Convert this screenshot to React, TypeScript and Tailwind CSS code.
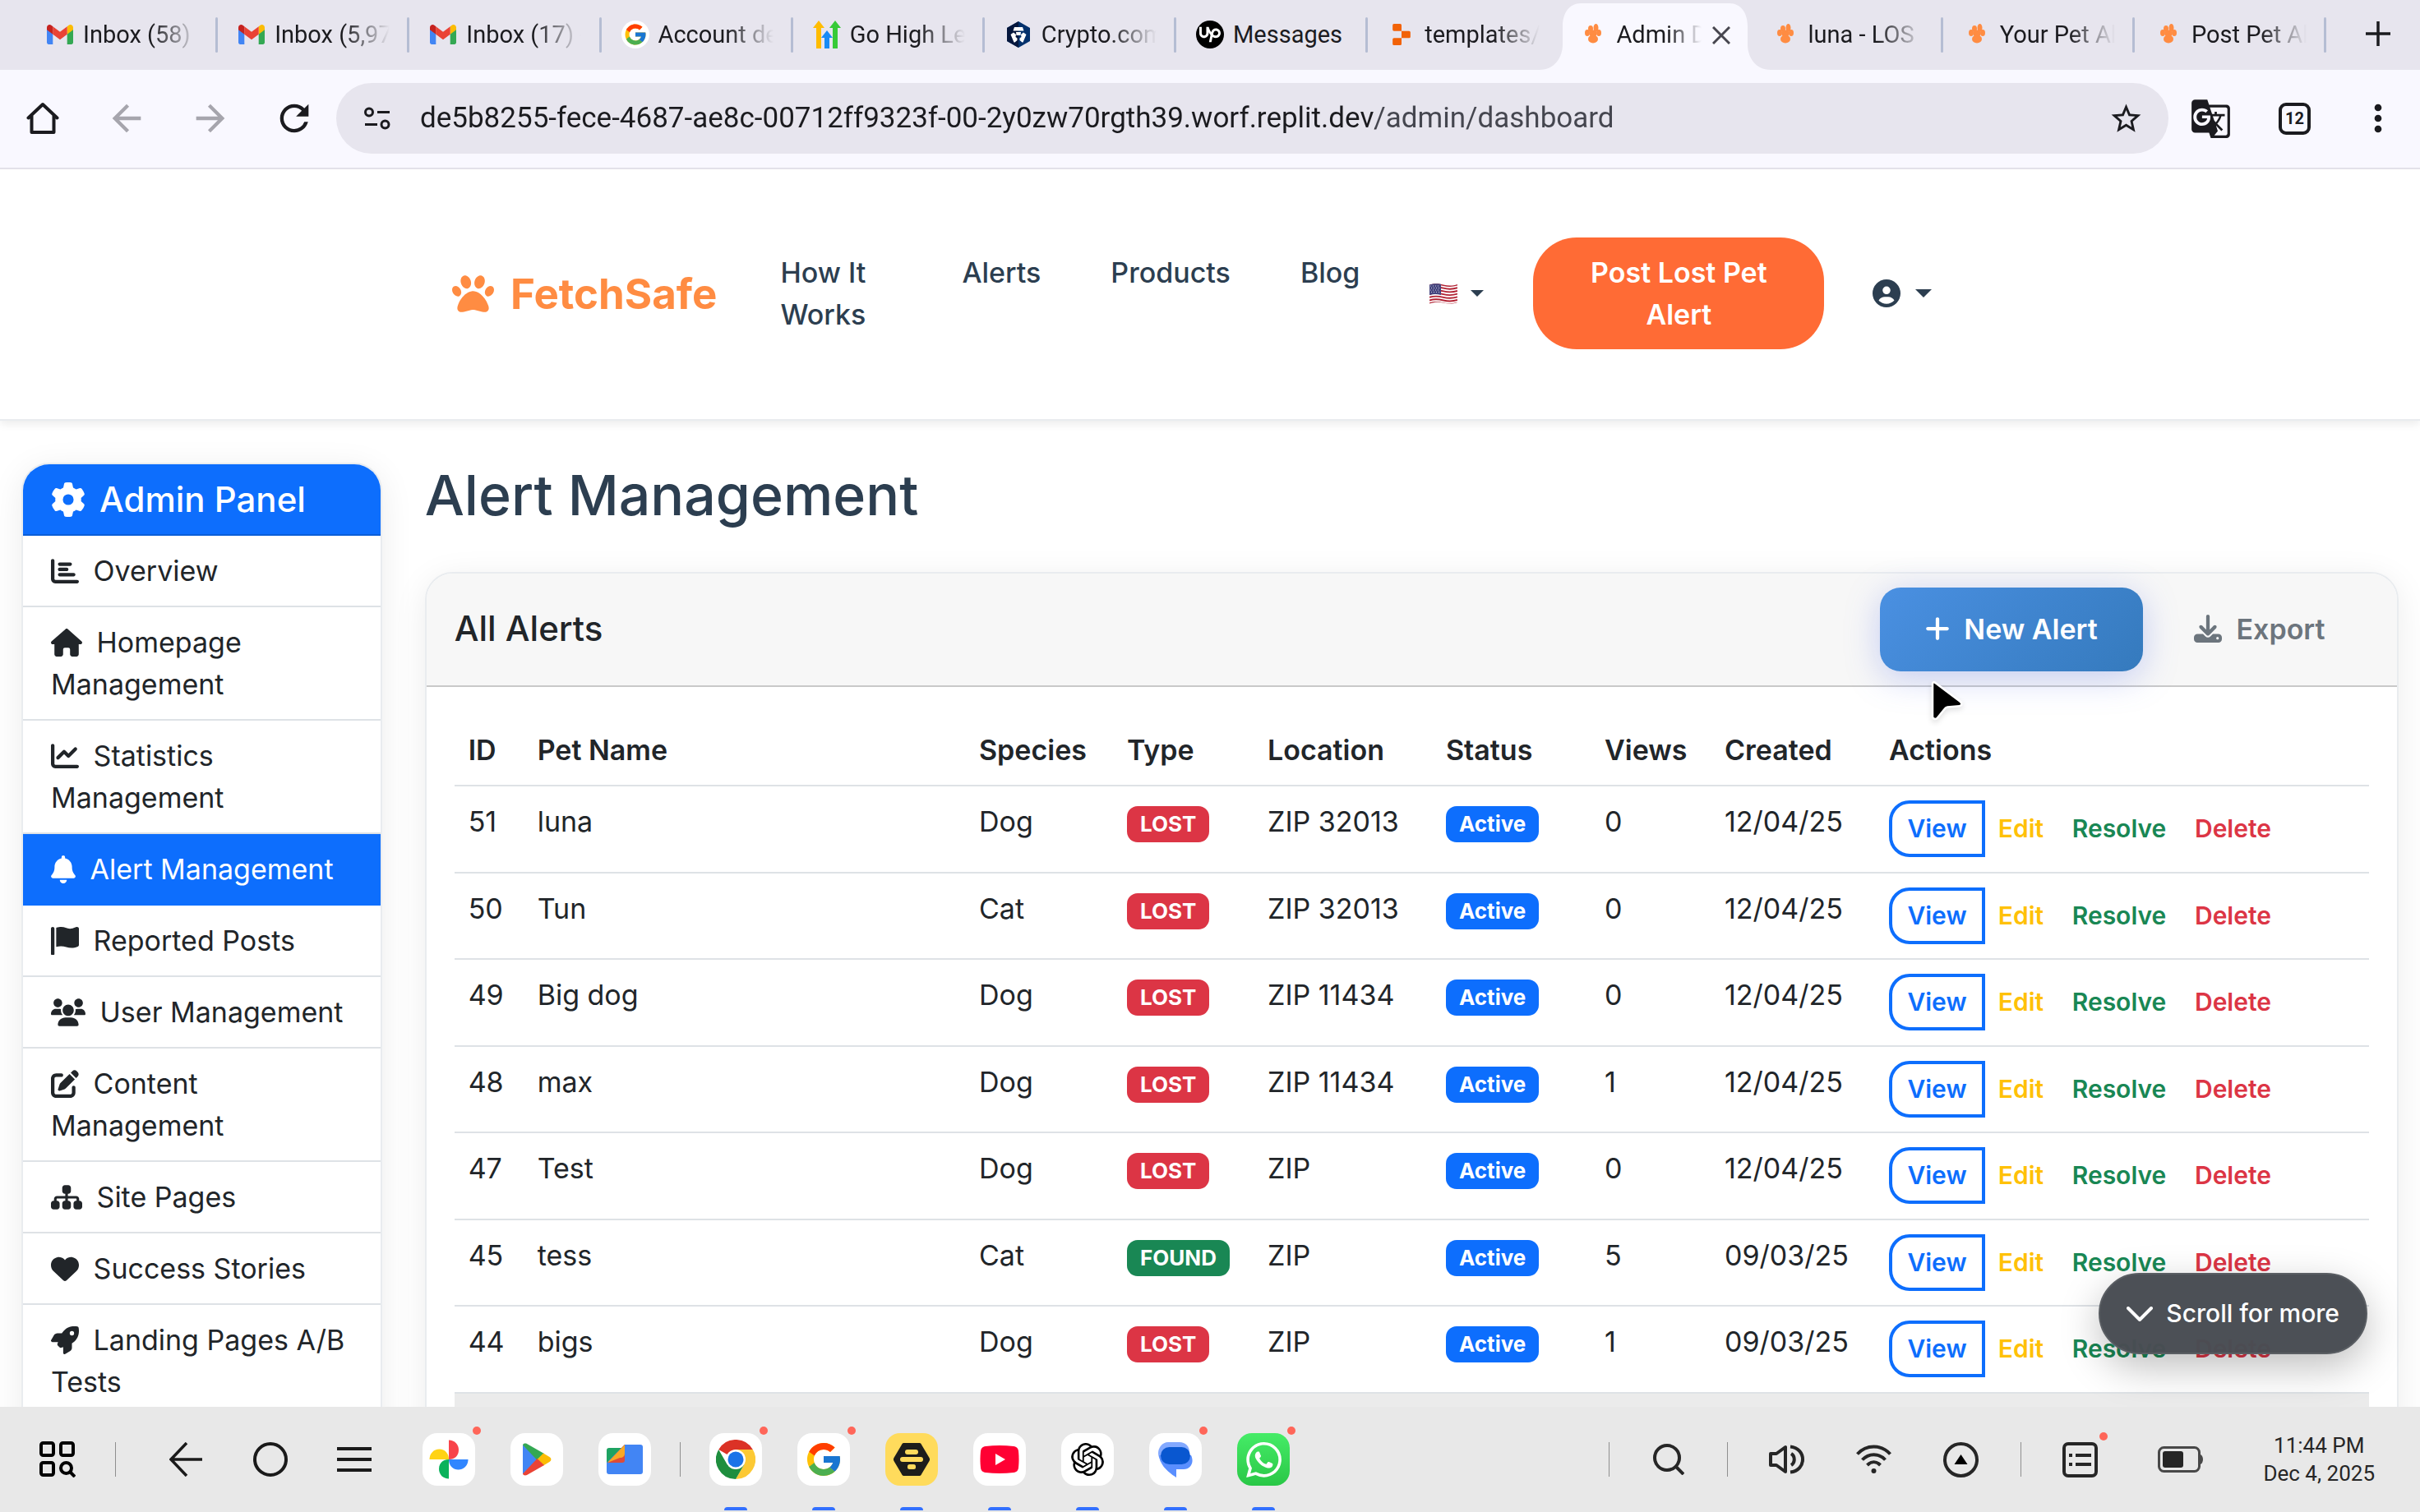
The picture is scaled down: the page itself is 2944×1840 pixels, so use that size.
import type { ReactNode } from "react";
import {
	FaBell,
	FaChartBar,
	FaChartLine,
	FaCircleUser,
	FaDownload,
	FaGear,
	FaHeart,
	FaHouse,
	FaPaw,
	FaPenToSquare,
	FaPlus,
	FaRocket,
	FaSitemap,
} from "react-icons/fa6";
import { FcGoogle } from "react-icons/fc";
import { MdArrowBack, MdArrowForward, MdGTranslate, MdMoreVert, MdRefresh, MdStarBorder } from "react-icons/md";
import { SiOpenai, SiReplit, SiUpwork, SiWhatsapp } from "react-icons/si";
import clsx from "clsx";

/* ---------- small drawings ---------- */

const GmailIcon = () => (
	<svg viewBox="0 0 32 24" className="w-8 h-6">
		<path d="M0 3.5V21.8C0 23 1 24 2.2 24H7.3V11.5Z" fill="#4285f4" />
		<path d="M24.7 24h5.1c1.2 0 2.2-1 2.2-2.2V3.5l-7.3 8Z" fill="#34a853" />
		<path d="M24.7 2.2v9.6L32 6.3V3.4c0-2.8-3.2-4.3-5.4-2.7Z" fill="#fbbc04" />
		<path d="M7.3 11.8V2.2l8.7 6.6 8.7-6.6v9.6L16 18.3Z" fill="#ea4335" />
		<path d="M0 3.4v2.9l7.3 5.5V2.2L5.4.7C3.2-.9 0 .6 0 3.4Z" fill="#c5221f" />
	</svg>
);

const GoogleCircle = () => (
	<span className="flex size-[34px] items-center justify-center rounded-full bg-white">
		<FcGoogle className="size-[30px]" />
	</span>
);

const HighLevelIcon = () => (
	<svg viewBox="0 0 34 34" className="size-[34px]">
		<path d="M0 9 7 0l7 9h-4v25H4V9Z" fill="#ffbc00" />
		<path d="M20 9l7-9 7 9h-4v25h-6V9Z" fill="#37ca37" />
		<path d="M10 21l7-9 7 9h-4v13h-6V21Z" fill="#188bf6" />
	</svg>
);

const CryptoIcon = () => (
	<svg viewBox="0 0 34 34" className="size-[34px]">
		<path d="M17 1 31 9v16l-14 8L3 25V9Z" fill="#03316c" />
		<path d="M17 1 3 9v16l14 8Z" fill="#06173d" />
		<path d="M12 8h10l1.500 4.500h-13Z" fill="#fff" />
		<path d="M14 14h6l-.5 4h-5Z" fill="#fff" />
		<path d="M7.500 17l3.500-2.500 3 2.500-.5 3 2 1.500v2.500l-3 2.500h-1Z" fill="#fff" />
		<path d="M26.500 17 23 14.500 20 17l.5 3-2 1.500v2.500l3 2.500h1Z" fill="#fff" />
	</svg>
);

const UpworkIcon = () => (
	<span className="flex size-[34px] items-center justify-center rounded-full bg-black text-white">
		<SiUpwork className="size-[26px]" />
	</span>
);

const PawFavicon = () => (
	<svg viewBox="0 0 34 34" className="size-[34px]" fill="#ff8c42">
		<ellipse cx="10" cy="15" rx="3" ry="4" />
		<ellipse cx="14" cy="10" rx="3" ry="4" />
		<ellipse cx="20.500" cy="9" rx="3" ry="5" />
		<ellipse cx="24" cy="15" rx="3" ry="4" />
		<ellipse cx="17" cy="16" rx="4.500" ry="4.500" />
		<ellipse cx="17" cy="22.500" rx="6" ry="5" />
	</svg>
);

const HomeIcon = () => (
	<svg viewBox="0 0 40 40" className="size-10" fill="none" stroke="#1b1b1f" strokeWidth="4" strokeLinejoin="round" strokeLinecap="round">
		<path d="M2.500 19.500 20 3l17.500 16.500M6.500 16.500V37h27V16.500" />
	</svg>
);

const FlagIcon = ({ className }: { className?: string }) => (
	<svg viewBox="0 0 512 512" fill="currentColor" className={className}>
		<path d="M64 496C64 504.8 56.75 512 48 512h-32C7.25 512 0 504.8 0 496V32c0-17.75 14.25-32 32-32s32 14.25 32 32V496zM476.3 0c-6.365 0-13.01 1.35-19.34 4.233c-45.69 20.86-79.56 27.94-107.8 27.94c-59.96 0-94.81-31.86-163.9-31.87C160.9 .3055 131.6 4.867 96 15.75v350.5c32-9.984 59.87-14.1 84.85-14.1c73.63 0 124.9 31.78 198.6 31.78c31.91 0 68.02-5.971 111.1-23.09C504.1 355.9 512 344.4 512 332.1V30.73C512 11.1 495.3 0 476.3 0z" />
	</svg>
);

const UsersIcon = ({ className }: { className?: string }) => (
	<svg viewBox="0 0 640 512" fill="currentColor" className={className}>
		<path d="M319.9 320c57.41 0 103.1-46.56 103.1-104c0-57.44-46.54-104-103.1-104c-57.41 0-103.1 46.56-103.1 104C215.9 273.4 262.5 320 319.9 320zM369.9 352H270.1C191.6 352 128 411.7 128 485.3C128 500.1 140.7 512 156.4 512h327.2C499.3 512 512 500.1 512 485.3C512 411.7 448.4 352 369.9 352zM512 160c44.18 0 80-35.82 80-80S556.2 0 512 0c-44.18 0-80 35.82-80 80S467.8 160 512 160zM183.9 216c0-5.449 .9824-10.63 1.609-15.91C174.6 194.1 162.6 192 149.9 192H88.08C39.44 192 0 233.8 0 285.3C0 295.6 7.887 304 17.62 304h199.5C196.7 280.2 183.9 249.7 183.9 216zM128 160c44.18 0 80-35.82 80-80S172.2 0 128 0C83.82 0 48 35.82 48 80S83.82 160 128 160zM551.9 192h-61.84c-12.8 0-24.88 3.037-35.86 8.24C454.8 205.5 455.8 210.6 455.8 216c0 33.71-12.78 64.21-33.16 88h199.7C632.1 304 640 295.6 640 285.3C640 233.8 600.6 192 551.9 192z" />
	</svg>
);

const UsFlag = () => (
	<svg viewBox="0 0 34 25" className="w-[34px] h-[25px]">
		<clipPath id="us-flag">
			<path d="M0 1.500C6-.5 11 0 17 1.500S28 3 34 1v22c-6 2-11 2-17 .5S6 22.500 0 24.500Z" />
		</clipPath>
		<g clipPath="url(#us-flag)">
			<path d="M0 0h34v25H0Z" fill="#fff" />
			<g stroke="#b22334" strokeWidth="1.900" fill="none">
				<path d="M0 2C6 0 11 .5 17 2S28 3.500 34 1.500" />
				<path d="M0 5.700c6-2 11-1.500 17 0s11 1.500 17-.5" />
				<path d="M0 9.400c6-2 11-1.500 17 0s11 1.500 17-.5" />
				<path d="M0 13.100c6-2 11-1.500 17 0s11 1.500 17-.5" />
				<path d="M0 16.800c6-2 11-1.500 17 0s11 1.500 17-.5" />
				<path d="M0 20.500c6-2 11-1.500 17 0s11 1.500 17-.5" />
				<path d="M0 24.200c6-2 11-1.500 17 0s11 1.500 17-.5" />
			</g>
			<path d="M0 0h14v14c-5-1.500-9-1.500-14 0Z" fill="#46467f" />
			<g stroke="#c9c9dd" strokeWidth="1" strokeDasharray="1 2">
				<path d="M1 3h12M2 5.500h12M1 8h12M2 10.500h12" />
			</g>
		</g>
	</svg>
);

const TuneIcon = () => (
	<svg viewBox="0 0 32 28" className="w-8 h-7 shrink-0" fill="none" stroke="#1b1b1f" strokeWidth="3">
		<circle cx="6" cy="6.500" r="4.500" />
		<path d="M16 6.500h15M1 21.500h15" />
		<circle cx="25.500" cy="21.500" r="4.500" />
	</svg>
);

const Cursor = () => (
	<svg viewBox="0 0 44 52" className="w-11 h-[52px] drop-shadow-md">
		<path d="M3 4.500C3 2 5 1.500 6.500 3L37 26c2.500 2.500 1.500 5-1.500 5.200L21 32.500c-1.500.2-2.500 1-3.500 2.500L9 45.500C7 48 3 47 3 44Z" fill="#000" stroke="#fff" strokeWidth="2.500" />
	</svg>
);

/* ---------- browser ---------- */

type Tab = { icon: ReactNode; title: string; active?: boolean; divider?: boolean };

const tabs: Tab[] = [
	{ icon: <GmailIcon />, title: "Inbox (58)", divider: true },
	{ icon: <GmailIcon />, title: "Inbox (5,97", divider: true },
	{ icon: <GmailIcon />, title: "Inbox (17) -", divider: true },
	{ icon: <GoogleCircle />, title: "Account de", divider: true },
	{ icon: <HighLevelIcon />, title: "Go High Le", divider: true },
	{ icon: <CryptoIcon />, title: "Crypto.com", divider: true },
	{ icon: <UpworkIcon />, title: "Messages", divider: true },
	{ icon: <SiReplit className="size-[26px] text-[#f26207]" />, title: "templates/" },
	{ icon: <PawFavicon />, title: "Admin D", active: true },
	{ icon: <PawFavicon />, title: "luna - LOS", divider: true },
	{ icon: <PawFavicon />, title: "Your Pet Al", divider: true },
	{ icon: <PawFavicon />, title: "Post Pet Al", divider: true },
];

const BrowserTab = ({ icon, title, active, divider }: Tab) => (
	<div className="relative flex h-full flex-1 items-center">
		{active && (
			<svg viewBox="0 0 289 81" preserveAspectRatio="none" className="absolute -left-7 -right-7 bottom-0 h-[81px] w-[289px]">
				<path d="M4 81C22 81 32 66 32 50V28C32 12 40 0 54 0H235C249 0 257 12 257 28V50C257 66 267 81 285 81Z" fill="#f9f8ff" />
			</svg>
		)}
		<button className="relative flex min-w-0 flex-1 items-center gap-[11px] pb-[2px] pl-6 text-left">
			<span className="flex size-[34px] shrink-0 items-center justify-center">{icon}</span>
			<span
				className={clsx(
					"overflow-hidden whitespace-nowrap text-[29px] leading-[40px] text-[#1b1b1f]",
					active ? "w-[104px]" : "w-[140px]",
					title !== "Messages" && "mask-r-from-60% mask-r-to-100%"
				)}
			>
				{title}
			</span>
		</button>
		{active && (
			<button aria-label="Close tab" className="relative mr-[26px] ml-[6px]">
				<svg viewBox="0 0 22 22" className="size-[22px]" stroke="#47464f" strokeWidth="3">
					<path d="M1 1l20 20M21 1 1 21" />
				</svg>
			</button>
		)}
		{divider && <span className="absolute right-0 h-[43px] w-[3px] rounded-full bg-[#b5bdd3]" />}
	</div>
);

const Browser = () => (
	<header className="shrink-0 font-[Roboto,sans-serif]">
		<div className="flex h-[85px] items-center bg-[#e7e5ee] pl-8">
			{tabs.map((tab) => (
				<BrowserTab key={tab.title} {...tab} />
			))}
			<button aria-label="New tab" className="mr-9 ml-12 pb-[4px]">
				<svg viewBox="0 0 30 30" className="size-[30px]" stroke="#1b1b1f" strokeWidth="3.500">
					<path d="M15 0v30M0 15h30" />
				</svg>
			</button>
		</div>
		<div className="flex items-center border-b-2 border-[#e3e1e9] bg-[#f9f8ff] pt-4 pb-[17px] pl-8 pr-[25px] text-[#1b1b1f]">
			<button aria-label="Home" className="mr-14"><HomeIcon /></button>
			<button aria-label="Back" className="mr-[50px] text-[#a6a5ad]"><MdArrowBack className="size-[52px]" /></button>
			<button aria-label="Forward" className="mr-[50px] text-[#a6a5ad]"><MdArrowForward className="size-[52px]" /></button>
			<button aria-label="Reload" className="mr-[25px]"><MdRefresh className="size-[52px]" /></button>
			<div className="flex h-[86px] flex-1 items-center rounded-full bg-[#e7e5ee] pl-[34px] pr-[30px]">
				<TuneIcon />
				<input
					aria-label="Address"
					className="mr-9 ml-9 min-w-0 flex-1 bg-[linear-gradient(90deg,#1b1b1f_1162px,#45464f_1162px)] bg-clip-text text-[35px] leading-[44px] text-transparent outline-none"
					defaultValue="de5b8255-fece-4687-ae8c-00712ff9323f-00-2y0zw70rgth39.worf.replit.dev/admin/dashboard"
				/>
				<button aria-label="Bookmark"><MdStarBorder className="size-[43px]" /></button>
			</div>
			<button aria-label="Translate" className="ml-[26px]"><MdGTranslate className="size-[51px]" /></button>
			<button className="ml-[57px] flex size-[39px] items-center justify-center rounded-[9px] border-4 border-[#1b1b1f] text-[20px] font-bold">12</button>
			<button aria-label="Menu" className="ml-[56px]"><MdMoreVert className="size-[52px]" /></button>
		</div>
	</header>
);

/* ---------- site ---------- */

const SiteNav = () => (
	<nav className="relative z-10 border-b-2 border-[#e9ecef] bg-white pt-[83px] pb-[85px] shadow-[0_4px_10px_rgba(0,0,0,0.08)]">
		<div className="mx-auto flex max-w-[1844px] items-center text-[34px] leading-[51px] font-medium text-[#2c3e50]">
			<a href="#home" className="mr-[77px] flex items-center gap-5 text-[51px] font-bold text-[#ff8c42]">
				<FaPaw className="size-[51px]" />
				FetchSafe
			</a>
			<ul className="flex items-start gap-[85px]">
				<li className="w-[136px]"><a href="#how">How It Works</a></li>
				<li><a href="#alerts">Alerts</a></li>
				<li><a href="#products">Products</a></li>
				<li><a href="#blog">Blog</a></li>
			</ul>
			<button aria-label="Language" className="ml-[85px] flex items-center gap-4">
				<UsFlag />
				<svg viewBox="0 0 16 8" className="h-2 w-4" fill="currentColor"><path d="M0 0h16L8 8Z" /></svg>
			</button>
			<a href="#post" className="ml-[60px] w-[354px] rounded-[53px] bg-[#ff6b35] px-[51px] py-[17px] text-center font-semibold text-white">
				Post Lost Pet Alert
			</a>
			<button aria-label="Account" className="ml-[59px] flex items-center gap-[18px]">
				<FaCircleUser className="size-[34px]" />
				<svg viewBox="0 0 20 10" className="h-[10px] w-5" fill="currentColor"><path d="M0 0h20L10 10Z" /></svg>
			</button>
		</div>
	</nav>
);

const iconStyle = "mr-2 inline-block h-[34px] align-[-5px]";

const menu = [
	{ icon: <FaChartBar className={clsx(iconStyle, "w-[34px]")} />, label: "Overview" },
	{ icon: <FaHouse className={clsx(iconStyle, "w-[38px]")} />, label: "Homepage Management" },
	{ icon: <FaChartLine className={clsx(iconStyle, "w-[34px]")} />, label: "Statistics Management" },
	{ icon: <FaBell className={clsx(iconStyle, "w-[30px]")} />, label: "Alert Management", active: true },
	{ icon: <FlagIcon className={clsx(iconStyle, "w-[34px]")} />, label: "Reported Posts" },
	{ icon: <UsersIcon className={clsx(iconStyle, "w-[42px]")} />, label: "User Management" },
	{ icon: <FaPenToSquare className={clsx(iconStyle, "w-[34px]")} />, label: "Content Management" },
	{ icon: <FaSitemap className={clsx(iconStyle, "w-[38px]")} />, label: "Site Pages" },
	{ icon: <FaHeart className={clsx(iconStyle, "w-[34px]")} />, label: "Success Stories" },
	{ icon: <FaRocket className={clsx(iconStyle, "w-[34px]")} />, label: "Landing Pages A/B Tests" },
];

const Sidebar = () => (
	<aside className="w-1/6 shrink-0 px-[26px]">
		<div className="overflow-hidden rounded-[34px] border-2 border-[#e9ecef] bg-white shadow-[0_8px_40px_rgba(0,0,0,0.08)]">
			<h5 className="flex items-center gap-[17px] border-b-2 border-[#0b5ed7] bg-[#0d6efd] px-[34px] py-[17px] text-[42px] leading-[51px] font-medium text-white">
				<FaGear className="size-[42px]" />
				Admin Panel
			</h5>
			<ul className="pb-[87px]">
				{menu.map(({ icon, label, active }) => (
					<li key={label}>
						<a
							href="#admin"
							className={clsx(
								"block border-b-2 px-[34px] py-[17px]",
								active ? "border-[#0d6efd] bg-[#0d6efd] text-white" : "border-[#dee2e6]"
							)}
						>
							{icon} {label}
						</a>
					</li>
				))}
			</ul>
		</div>
	</aside>
);

type Alert = {
	id: number;
	name: string;
	species: string;
	type: "LOST" | "FOUND";
	location: string;
	views: number;
	created: string;
};

const alerts: Alert[] = [
	{ id: 51, name: "luna", species: "Dog", type: "LOST", location: "ZIP 32013", views: 0, created: "12/04/25" },
	{ id: 50, name: "Tun", species: "Cat", type: "LOST", location: "ZIP 32013", views: 0, created: "12/04/25" },
	{ id: 49, name: "Big dog", species: "Dog", type: "LOST", location: "ZIP 11434", views: 0, created: "12/04/25" },
	{ id: 48, name: "max", species: "Dog", type: "LOST", location: "ZIP 11434", views: 1, created: "12/04/25" },
	{ id: 47, name: "Test", species: "Dog", type: "LOST", location: "ZIP", views: 0, created: "12/04/25" },
	{ id: 45, name: "tess", species: "Cat", type: "FOUND", location: "ZIP", views: 5, created: "09/03/25" },
	{ id: 44, name: "bigs", species: "Dog", type: "LOST", location: "ZIP", views: 1, created: "09/03/25" },
];

const columns = [
	{ label: "ID", width: "w-[84px]" },
	{ label: "Pet Name", width: "" },
	{ label: "Species", width: "w-[180px]" },
	{ label: "Type", width: "w-[171px]" },
	{ label: "Location", width: "w-[217px]" },
	{ label: "Status", width: "w-[193px]" },
	{ label: "Views", width: "w-[146px]" },
	{ label: "Created", width: "w-[200px]" },
	{ label: "Actions", width: "w-[601px]" },
];

const Badge = ({ className, children }: { className: string; children: ReactNode }) => (
	<span className={clsx("inline-block rounded-[13px] px-4 py-[9px] text-[26px] leading-[26px] font-bold text-white", className)}>
		{children}
	</span>
);

const cell = "px-[17px] pt-[17px] align-top whitespace-nowrap";

const AlertTable = () => (
	<table className="w-full table-fixed text-left">
		<thead>
			<tr className="border-b-2 border-[#dee2e6]">
				{columns.map(({ label, width }) => (
					<th key={label} className={clsx("px-[17px] py-[17px] font-semibold", width)}>{label}</th>
				))}
			</tr>
		</thead>
		<tbody>
			{alerts.map((alert) => (
				<tr key={alert.id} className="border-b-2 border-[#dee2e6] odd:h-[106px] even:h-[105px]">
					<td className={cell}>{alert.id}</td>
					<td className={cell}>{alert.name}</td>
					<td className={cell}>{alert.species}</td>
					<td className={cell}>
						<Badge className={alert.type === "LOST" ? "bg-[#dc3545]" : "bg-[#198754]"}>{alert.type}</Badge>
					</td>
					<td className={cell}>{alert.location}</td>
					<td className={cell}><Badge className="bg-[#0d6efd]">Active</Badge></td>
					<td className={cell}>{alert.views}</td>
					<td className={cell}>{alert.created}</td>
					<td className={cell}>
						<div className="flex h-[69px] text-[30px] leading-[45px] font-semibold">
							<button className="w-[117px] rounded-l-[25px] border-4 border-[#0d6efd] text-[#0d6efd]">View</button>
							<button className="w-[87px] text-[#ffc107]">Edit</button>
							<button className="w-[152px] text-[#198754]">Resolve</button>
							<button className="w-[125px] text-[#dc3545]">Delete</button>
						</div>
					</td>
				</tr>
			))}
			<tr className="h-[106px] bg-[#ebebeb]">
				<td colSpan={9} />
			</tr>
		</tbody>
	</table>
);

const Dashboard = () => (
	<main className="relative min-h-0 flex-1 overflow-hidden bg-white font-[Inter,sans-serif] text-[34px] leading-[51px] text-[#212529]">
		<SiteNav />
		<div className="flex pt-[51px]">
			<Sidebar />
			<section className="min-w-0 flex-1 px-[26px]">
				<h2 className="mb-[55px] text-[68px] leading-[78px] font-medium text-[#2c3e50]">Alert Management</h2>
				<div className="rounded-[34px] border-2 border-[#e9ecef] bg-white shadow-[0_8px_40px_rgba(0,0,0,0.08)]">
					<div className="flex items-center rounded-t-[32px] border-b-2 border-[#c9c9c9] bg-[#f7f7f7] px-[34px] py-[17px]">
						<h5 className="mr-auto mb-1 text-[42px] font-medium">All Alerts</h5>
						<button className="mr-2 flex h-[102px] w-[320px] items-center justify-center gap-[17px] rounded-[25px] bg-linear-135 from-[#4a90e2] to-[#357abd] pb-[2px] font-semibold text-white shadow-[0_8px_40px_rgba(102,126,234,0.35)]">
							<FaPlus className="h-[34px] w-[30px]" />
							New Alert
						</button>
						<button className="flex h-[102px] w-[267px] items-center justify-center gap-[18px] pb-[2px] font-semibold text-[#6c757d]">
							<FaDownload className="size-[34px]" />
							Export
						</button>
					</div>
					<div className="px-[34px] py-[34px]">
						<AlertTable />
					</div>
				</div>
			</section>
		</div>
		<button className="absolute right-16 bottom-16 flex h-[99px] items-center gap-4 rounded-full border-2 border-[#5a5e63] bg-[#484c53]/98 px-8 text-[30px] font-medium text-white shadow-[0_16px_48px_rgba(0,0,0,0.25)]">
			<svg viewBox="0 0 32 18" className="h-[18px] w-8" fill="none" stroke="currentColor" strokeWidth="4" strokeLinecap="round" strokeLinejoin="round">
				<path d="M2 2l14 14L30 2" />
			</svg>
			Scroll for more
		</button>
	</main>
);

/* ---------- system bar ---------- */

const PhotosIcon = () => (
	<svg viewBox="0 0 48 48" className="size-12">
		<path d="M24 24V.5c7 0 12 5 12 12S31 24 24 24Z" fill="#f8434a" />
		<path d="M24 24h23.500c0 7-5 12.500-12 12.500S24 31 24 24Z" fill="#3186ff" />
		<path d="M24 24v23.500c-7 0-12-5-12-12S17 24 24 24Z" fill="#0ab25b" />
		<path d="M24 24H.5c0-7 5-12.500 12-12.500S24 17 24 24Z" fill="#ffd314" />
	</svg>
);

const PlayIcon = () => (
	<svg viewBox="0 0 36 40" className="h-10 w-9">
		<path d="M1 2v36l18-18Z" fill="#4285f4" />
		<path d="M1 2.500C1.500.5 4 0 6 1l21 12-8.500 8Z" fill="#34a853" />
		<path d="M26 12.500l7.500 4.500c2.500 1.500 2.500 4.500 0 6L26 27.500 18.500 20Z" fill="#fbbc04" />
		<path d="M1 37.500c.5 2 3 2.500 5 1.500l21-12-8.500-8Z" fill="#ea4335" />
	</svg>
);

const FilesIcon = () => (
	<svg viewBox="0 0 44 36" className="h-9 w-11">
		<path d="M3 4h18v18H0V7c0-2 1-3 3-3Z" fill="#1ea362" />
		<path d="M22 0h19c2 0 3 1 3 3v30c0 2-1 3-3 3H3c-2 0-3-1-3-3V22Z" fill="#4285f4" />
		<path d="M1 22 22 0v19c0 2-1 3-3 3Z" fill="#dd4b39" />
		<path d="M1 22 22 0v10c0 4-2 6-6 6Z" fill="#f9a825" />
	</svg>
);

const ChromeIcon = () => (
	<svg viewBox="0 0 48 48" className="size-12">
		<path d="M24 24 3.200 12A24 24 0 0 1 44.800 12Z" fill="#db3226" />
		<path d="M24 24V12H44.800A24 24 0 0 1 24 48L34.400 30Z" fill="#fcc934" />
		<path d="M3.200 12 13.600 30 24 36 34.400 30 24 48A24 24 0 0 1 3.200 12Z" fill="#1e8e3e" />
		<circle cx="24" cy="24" r="12" fill="#fff" />
		<circle cx="24" cy="24" r="9.500" fill="#1a73e8" />
	</svg>
);

const HiveIcon = () => (
	<svg viewBox="0 0 44 40" className="h-10 w-11">
		<path d="M13 0h18c1.500 0 2.500.5 3 2l9.500 16c.7 1.300.7 2.700 0 4L34 38c-.5 1.500-1.500 2-3 2H13c-1.500 0-2.500-.5-3-2L.5 22c-.7-1.300-.7-2.700 0-4L10 2c.5-1.500 1.500-2 3-2Z" fill="#1d1d1b" />
		<g fill="#ffdb5c">
			<rect x="14" y="8" width="16" height="6" rx="3" />
			<rect x="8" y="17" width="28" height="6" rx="3" />
			<rect x="17" y="26" width="10" height="6" rx="2.500" />
		</g>
	</svg>
);

const YoutubeIcon = () => (
	<svg viewBox="0 0 48 34" className="h-[34px] w-12">
		<path d="M7 1c11-1.300 23-1.300 34 0 4 .5 5.500 2.500 6 6 .7 7 .7 13 0 20-.5 3.500-2 5.500-6 6-11 1.300-23 1.300-34 0-4-.5-5.500-2.500-6-6-.7-7-.7-13 0-20 .5-3.500 2-5.500 6-6Z" fill="#ff0033" />
		<path d="M19 10v14l12-7Z" fill="#fff" />
	</svg>
);

const MessagesIcon = () => (
	<svg viewBox="0 0 44 44" className="size-11">
		<path d="M13 1h14c7 0 12 5 12 12v12H10C4 25 1 20 1 14S6 1 13 1Z" fill="#83a9ff" />
		<path d="M2 17h39c4 8 0 17-9 17H23v10C17 40 3 31 2 17Z" fill="#5a8fff" />
		<rect x="4" y="7" width="36" height="21" rx="10.500" fill="#0957d0" />
	</svg>
);

const apps: { name: string; icon: ReactNode; tile?: string; dot?: boolean }[] = [
	{ name: "Chrome", icon: <ChromeIcon />, dot: true },
	{ name: "Google", icon: <FcGoogle className="size-[48px]" />, dot: true },
	{ name: "Hive", icon: <HiveIcon />, tile: "bg-[#ffdb5c]" },
	{ name: "YouTube", icon: <YoutubeIcon /> },
	{ name: "ChatGPT", icon: <SiOpenai className="size-10 text-black" /> },
	{ name: "Messages", icon: <MessagesIcon />, dot: true },
	{ name: "WhatsApp", icon: <SiWhatsapp className="size-[43px] text-white" />, tile: "bg-linear-to-b from-[#45ec67] to-[#29c746]", dot: true },
];

const Dot = () => <span className="absolute -top-2 -right-[7px] size-[10px] rounded-full bg-[#ff6659]" />;
const Divider = () => <span className="h-[42px] w-px bg-[#8f8f8f]" />;

const AppTile = ({ name, icon, tile = "bg-white", dot, running }: { name: string; icon: ReactNode; tile?: string; dot?: boolean; running?: boolean }) => (
	<div className="relative flex h-full items-center">
		<button aria-label={name} className={clsx("relative flex size-16 items-center justify-center rounded-[18px]", tile)}>
			{icon}
			{dot && <Dot />}
		</button>
		{running && <span className="absolute bottom-[2px] left-[18px] h-1 w-7 rounded-t-full bg-[#3370ff]" />}
	</div>
);

const TaskBar = () => (
	<footer className="flex h-32 shrink-0 items-center bg-[#e8e8e8] pr-[55px] pl-12 font-[Roboto,sans-serif] text-[#262626]">
		<button aria-label="All apps" className="mr-12">
			<svg viewBox="0 0 44 44" className="size-11" fill="none" stroke="#000" strokeWidth="4">
				<rect x="2" y="2" width="15" height="15" rx="2.500" />
				<rect x="26" y="2" width="15" height="15" rx="2.500" />
				<rect x="2" y="26" width="15" height="15" rx="2.500" />
				<circle cx="32.500" cy="32.500" r="6.500" />
				<path d="M37 37l6 6" />
			</svg>
		</button>
		<Divider />
		<div className="mr-[62px] ml-[65px] flex gap-[60px] text-[#1a1a1a]">
			<button aria-label="Back">
				<svg viewBox="0 0 42 42" className="size-[42px]" fill="none" stroke="currentColor" strokeWidth="3.500">
					<path d="M40 21H2M21 1 2 21l19 20" />
				</svg>
			</button>
			<button aria-label="Home">
				<svg viewBox="0 0 42 42" className="size-[42px]" fill="none" stroke="currentColor" strokeWidth="4">
					<circle cx="21" cy="21" r="19" />
				</svg>
			</button>
			<button aria-label="Recents">
				<svg viewBox="0 0 42 42" className="size-[42px]" stroke="currentColor" strokeWidth="4">
					<path d="M0 8h42M0 21h42M0 34h42" />
				</svg>
			</button>
		</div>
		<div className="mr-[35px] flex h-full items-center gap-[43px]">
			<AppTile name="Photos" icon={<PhotosIcon />} dot />
			<AppTile name="Play Store" icon={<PlayIcon />} />
			<AppTile name="Files" icon={<FilesIcon />} />
		</div>
		<Divider />
		<div className="ml-[35px] flex h-full items-center gap-[43px]">
			{apps.map((app) => (
				<AppTile key={app.name} {...app} running />
			))}
		</div>
		<div className="ml-auto flex items-center">
			<Divider />
			<button aria-label="Search" className="mr-[52px] ml-[53px]">
				<svg viewBox="0 0 38 38" className="size-[38px]" fill="none" stroke="currentColor" strokeWidth="4">
					<circle cx="17" cy="17" r="15" />
					<path d="M27 27l10 10" />
				</svg>
			</button>
			<Divider />
			<button aria-label="Volume" className="mr-[63px] ml-[50px]">
				<svg viewBox="0 0 43 36" className="h-9 w-[43px]" fill="none" stroke="currentColor" strokeWidth="4">
					<path d="M2 11h7L20 3v30L9 25H2Z" strokeLinejoin="round" />
					<path d="M27 11c5 3 5 11 0 14M26 2.500c20 2 20 29 0 31" />
				</svg>
			</button>
			<button aria-label="Wi-Fi" className="mr-[63px]">
				<svg viewBox="0 0 43 36" className="h-9 w-[43px]" fill="none" stroke="currentColor" strokeWidth="4">
					<path d="M1.500 11.500c11-12 29-12 40 0M7.500 18.500c8-8.500 20-8.500 28 0M13.500 25c5-5 11-5 16 0" />
					<circle cx="21.500" cy="32" r="3" fill="currentColor" stroke="none" />
				</svg>
			</button>
			<button aria-label="Show more" className="mr-[51px]">
				<svg viewBox="0 0 43 43" className="size-[43px]">
					<circle cx="21.500" cy="21.500" r="19.500" fill="none" stroke="currentColor" strokeWidth="4" />
					<path d="M21.500 15l8 12h-16Z" fill="#000" />
				</svg>
			</button>
			<Divider />
			<button aria-label="Notifications" className="relative ml-[50px]">
				<svg viewBox="0 0 43 43" className="size-[43px]" fill="none" stroke="currentColor" strokeWidth="4">
					<rect x="2" y="2" width="39" height="39" rx="5" />
					<path d="M8 16h4M16 16h19M8 27h4M16 27h19" />
				</svg>
				<span className="absolute -top-3 -right-3 size-[10px] rounded-full bg-[#ff6659]" />
			</button>
			<svg viewBox="0 0 55 32" className="mr-[73px] ml-[73px] h-8 w-[55px]">
				<rect x="1.500" y="1.500" width="49" height="29" rx="6" fill="none" stroke="#484848" strokeWidth="3" />
				<rect x="6" y="6" width="25" height="20" rx="3" fill="#262626" />
				<path d="M52 10c4 2 4 10 0 12Z" fill="#484848" />
			</svg>
			<div className="text-center text-[26px] leading-[34px]">
				<p>11:44 PM</p>
				<p>Dec 4, 2025</p>
			</div>
		</div>
	</footer>
);

export default function App() {
	return (
		<div className="relative flex h-screen flex-col overflow-hidden">
			<Browser />
			<Dashboard />
			<TaskBar />
			<div className="pointer-events-none absolute top-[828px] left-[2348px] z-20">
				<Cursor />
			</div>
		</div>
	);
}
